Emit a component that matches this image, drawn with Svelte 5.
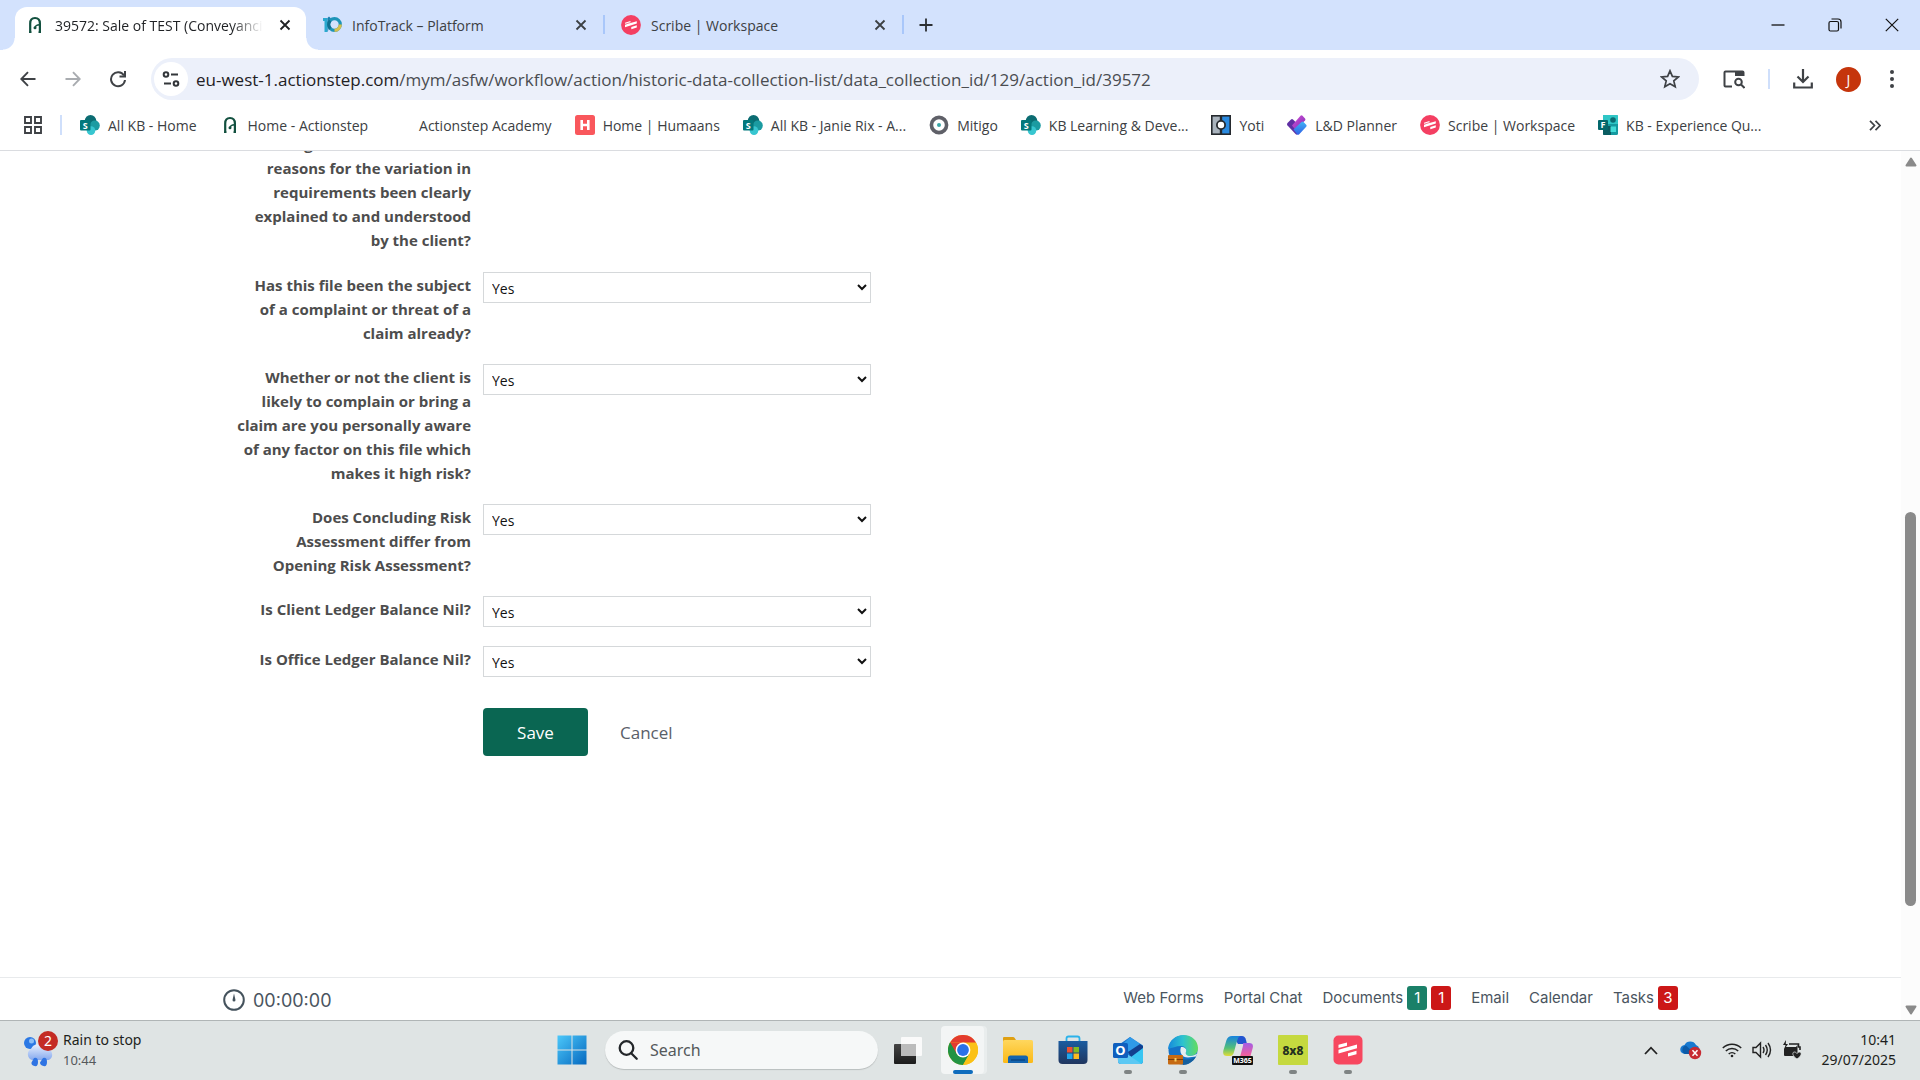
<script>
  const tabs = [
    { title: '39572: Sale of TEST (Conveyancing)', icon: 'actionstep', active: true },
    { title: 'InfoTrack – Platform', icon: 'infotrack', active: false },
    { title: 'Scribe | Workspace', icon: 'scribe', active: false }
  ];

  const bookmarks = [
    { title: 'All KB - Home', icon: 'sharepoint' },
    { title: 'Home - Actionstep', icon: 'actionstep' },
    { title: 'Actionstep Academy', icon: 'blank' },
    { title: 'Home | Humaans', icon: 'humaans' },
    { title: 'All KB - Janie Rix - A...', icon: 'sharepoint' },
    { title: 'Mitigo', icon: 'mitigo' },
    { title: 'KB Learning & Deve...', icon: 'sharepoint' },
    { title: 'Yoti', icon: 'yoti' },
    { title: 'L&D Planner', icon: 'planner' },
    { title: 'Scribe | Workspace', icon: 'scribe' },
    { title: 'KB - Experience Qu...', icon: 'forms' }
  ];

  const questions = [
    'Has this file been the subject\nof a complaint or threat of a\nclaim already?',
    'Whether or not the client is\nlikely to complain or bring a\nclaim are you personally aware\nof any factor on this file which\nmakes it high risk?',
    'Does Concluding Risk\nAssessment differ from\nOpening Risk Assessment?',
    'Is Client Ledger Balance Nil?',
    'Is Office Ledger Balance Nil?'
  ];

  const footerLinks = [
    { label: 'Web Forms', badges: [] },
    { label: 'Portal Chat', badges: [] },
    { label: 'Documents', badges: [{ n: 1, tone: 'green' }, { n: 1, tone: 'red' }] },
    { label: 'Email', badges: [] },
    { label: 'Calendar', badges: [] },
    { label: 'Tasks', badges: [{ n: 3, tone: 'red' }] }
  ];

  const apps = [
    { name: 'Task view', icon: 'taskview', state: '' },
    { name: 'Chrome', icon: 'chrome', state: 'current' },
    { name: 'File Explorer', icon: 'folder', state: '' },
    { name: 'Store', icon: 'store', state: '' },
    { name: 'Outlook', icon: 'outlook', state: 'running' },
    { name: 'Edge', icon: 'edge', state: 'running' },
    { name: 'M365 Copilot', icon: 'copilot', state: '' },
    { name: '8x8', icon: 'eight', state: 'running' },
    { name: 'Scribe', icon: 'scribeapp', state: 'running' }
  ];
</script>

{#snippet siteIcon(name)}
  <svg class="site-icon" viewBox="0 0 20 20" aria-hidden="true">
    {#if name === 'actionstep'}
      <path d="M5.200 17V8.400C5.200 5 7.200 3 10 3s4.900 2 4.900 5.400V17" fill="none" stroke="#12503f" stroke-width="2.200" />
      <path d="M14.500 9.800c-2.600 0-4 .8-4.500 3" fill="none" stroke="#12503f" stroke-width="1.500" />
      <circle cx="10" cy="12.800" r="1.500" fill="#12503f" />
      <path d="M4 17.300h2.500M13.500 17.300H16" stroke="#12503f" stroke-width="1.500" />
    {:else if name === 'infotrack'}
      <path d="M1 3h4.500v14H2.500V6H1z" fill="#2aa9cf" />
      <path d="M5.500 17C8 13 5.500 8 9 3.500L7 1.500 5.500 3z" fill="#1b7fae" />
      <circle cx="12.500" cy="9.500" r="5.800" fill="none" stroke="#1d94b8" stroke-width="3.200" />
      <path d="M18.300 9.500a5.800 5.800 0 0 1-5.800 5.800" fill="none" stroke="#d6c04e" stroke-width="3.200" />
      <path d="M8.200 5.600a5.800 5.800 0 0 0 .2 8" fill="none" stroke="#0f6f8f" stroke-width="3.200" />
    {:else if name === 'scribe'}
      <circle cx="10" cy="10" r="9.900" fill="#f43f62" />
      <path d="m4 7.800 5.500-1.700v2L15.800 6.300v2.300L4 12.200V9.800l2-.6H4zM10.300 12l5.500-1.700v2.200l-5.500 1.800z" fill="#fff" />
      <path d="m4 9.200 5.800-1.700" stroke="#f43f62" stroke-width=".7" />
    {:else if name === 'sharepoint'}
      <circle cx="10.500" cy="5.800" r="5.800" fill="#0b6c72" />
      <circle cx="14.800" cy="10.600" r="5" fill="#1b9ba1" />
      <circle cx="11" cy="15.600" r="4.300" fill="#37c6d0" />
      <rect x="0" y="5" width="10.500" height="10.500" rx="1" fill="#03787c" />
      <text x="5.200" y="13.500" font-size="9" font-weight="700" fill="#fff" text-anchor="middle">S</text>
    {:else if name === 'humaans'}
      <rect width="20" height="20" rx="2.500" fill="#f9575c" />
      <path d="M6.700 5v10M13.300 5v10M6.700 10h6.600" stroke="#fff" stroke-width="2.600" />
    {:else if name === 'mitigo'}
      <circle cx="10" cy="10" r="7.600" fill="none" stroke="#5f6068" stroke-width="3.600" />
      <circle cx="10" cy="10" r="2" fill="#3aa6a6" />
    {:else if name === 'yoti'}
      <rect x="0.800" y="0.800" width="18.400" height="18.400" fill="#a9b3bd" />
      <path d="M10 1h9.200v18H10z" fill="#2a8ae0" />
      <rect x="0.800" y="0.800" width="18.400" height="18.400" fill="none" stroke="#25292e" stroke-width="1.600" />
      <path d="M10 0v20" stroke="#25292e" stroke-width="2.400" />
      <circle cx="10" cy="10" r="4.100" fill="#fff" stroke="#25292e" stroke-width="1.800" />
    {:else if name === 'planner'}
      <defs>
        <linearGradient id="plA" x1="0" y1="0" x2="1" y2="1"><stop offset="0" stop-color="#d84fd8" /><stop offset="1" stop-color="#7a2fb5" /></linearGradient>
        <linearGradient id="plB" x1="0" y1="0" x2="0" y2="1"><stop offset="0" stop-color="#41b5f5" /><stop offset="1" stop-color="#2f5fe6" /></linearGradient>
      </defs>
      <path d="m.5 8 3.500-3.500q1-1 2 0l4.500 4.500v10.500q-1 .5-2-.5l-8-8.500q-1-1.200 0-2.500" fill="#5f2fa3" />
      <path d="M5 10.500 13.500.8q1-1 2 0L18 3.500q.8 1 0 2L8.500 15z" fill="url(#plA)" />
      <path d="m6.500 14.500 8-7.500q1-1 2 0l2.700 2.800q.8 1 0 2L12 19.500q-1 .8-2-.3z" fill="url(#plB)" />
    {:else if name === 'forms'}
      <rect x="5" y="0" width="15" height="20" rx="1.500" fill="#159aa0" />
      <path d="M5 0h14q1 0 1 1v8H5z" fill="#2fc6c6" />
      <path d="M5 11h8v9H6q-1 0-1-1z" fill="#0a5c61" />
      <circle cx="15" cy="5" r="2.800" fill="#0b6c72" />
      <rect x="12.500" y="11.500" width="5.500" height="5.500" fill="#43dcd8" />
      <rect x="0" y="5" width="10" height="10" rx="1" fill="#03676b" />
      <text x="5" y="13.200" font-size="9" font-weight="700" fill="#fff" text-anchor="middle">F</text>
    {/if}
  </svg>
{/snippet}

{#snippet cross()}
  <svg width="12" height="12" viewBox="0 0 12 12" aria-hidden="true"><path d="m1.500 1.500 9 9m0-9-9 9" stroke="currentColor" stroke-width="1.800" /></svg>
{/snippet}

{#snippet appIcon(name)}
  <svg class="app-icon" viewBox="0 0 30 30" aria-hidden="true">
    {#if name === 'taskview'}
      <defs><linearGradient id="tvA" x1="0" y1="0" x2="0" y2="1"><stop offset="0" stop-color="#444" /><stop offset="1" stop-color="#1c1c1c" /></linearGradient></defs>
      <rect x="1" y="9" width="22" height="20" rx="1" fill="url(#tvA)" />
      <rect x="8" y="2" width="21" height="19" rx="1" fill="#fafafa" />
      <path d="M8 9h15v12H8z" fill="#bcbcbc" />
    {:else if name === 'chrome'}
      <circle cx="15" cy="15" r="15" fill="#fbc116" />
      <path d="M2 7.500A15 15 0 0 0 15 30l6.500-11.300L15 15z" fill="#229342" />
      <path d="M15 7.500h13A15 15 0 0 1 15 30l6.500-11.200z" fill="#fbc116" />
      <path d="M2 7.500A15 15 0 0 1 28 7.500H15z" fill="#e33b2e" />
      <path d="m2 7.500 6.500 11.200L15 15V7.500z" fill="#e33b2e" />
      <path d="m2 7.500 6.500 11.200L4 21A15 15 0 0 1 2 7.500" fill="#229342" />
      <circle cx="15" cy="15" r="7.400" fill="#fff" />
      <circle cx="15" cy="15" r="5.900" fill="#2a71e8" />
    {:else if name === 'folder'}
      <defs><linearGradient id="foA" x1="0" y1="0" x2="0" y2="1"><stop offset="0" stop-color="#ffd75e" /><stop offset="1" stop-color="#fbb917" /></linearGradient></defs>
      <path d="M0 3q0-1 1-1h9q1 0 1.500.8L13 5v8H0z" fill="#dfa012" />
      <rect x="0" y="5" width="30" height="23" rx="1.500" fill="url(#foA)" />
      <path d="M5 28v-5q0-2.500 2.500-2.500h15q2.500 0 2.500 2.500v5z" fill="#1464ae" />
      <path d="M8 25h14" stroke="#0b4d8f" stroke-width="2" />
    {:else if name === 'store'}
      <defs><linearGradient id="stA" x1="0" y1="0" x2="0" y2="1"><stop offset="0" stop-color="#1b5ca0" /><stop offset="1" stop-color="#20365f" /></linearGradient></defs>
      <path d="M8.500 8V3.500q0-2 2-2h9q2 0 2 2V8" fill="none" stroke="#2bb2ea" stroke-width="1.800" />
      <path d="M.5 6h29v19q0 4-4 4h-21q-4 0-4-4z" fill="url(#stA)" />
      <path d="M9 12h5.500v5.500H9z" fill="#ef5130" /><path d="M15.500 12H21v5.500h-5.500z" fill="#80bb22" />
      <path d="M9 18.500h5.500V24H9z" fill="#20a5ea" /><path d="M15.500 18.500H21V24h-5.500z" fill="#fcba20" />
    {:else if name === 'outlook'}
      <path d="M4 11 17 2l13 9v15q0 3-3 3H8q-3 0-3-3z" fill="#1b72cd" />
      <path d="m9 10 8-8 13 8.500L18 19z" fill="#2f9ae8" />
      <path d="m30 11-14 11 3 7h8q3 0 3-3z" fill="#38c5f2" />
      <path d="m15 17 12-8 3 2v2L18 22z" fill="#123f8e" />
      <path d="M5 19h9l14 9.500q-.5.500-1 .5H8q-3 0-3-3z" fill="#5cc8f3" />
      <rect x="0" y="8" width="15" height="15" rx="1.500" fill="#0f5fbe" />
      <text x="7.500" y="20" font-size="13" font-weight="700" fill="#fff" text-anchor="middle">O</text>
    {:else if name === 'edge'}
      <defs><linearGradient id="edA" x1="0" y1="0" x2="1" y2="0"><stop offset="0" stop-color="#1689dc" /><stop offset=".5" stop-color="#2dc3cf" /><stop offset="1" stop-color="#63dc5d" /></linearGradient></defs>
      <circle cx="15" cy="15" r="14.500" fill="#1472c8" />
      <path d="M0 14C1 5 8 0 15.500 0 24 0 30 6 30 13c0 5-3.500 8-8 8-4 0-5-2-4-4 1-3-1-6-5-6-5 0-9 2-13 3" fill="url(#edA)" />
      <path d="M13 12c4 0 6 2 5 5-1 2 1 4 4 4 3 0 5-1 7-2.500 0 1-.4 2-1 3l-8 1c-6 0-9-5-7-10.500" fill="#e4edf1" />
      <path d="M10 21c5 5 12 4 18 .500C25 27 20 30 15 30z" fill="#155f9e" />
      <rect x="0" y="20" width="15" height="9.500" rx="1" fill="#c66a12" /><path d="M0 24.500h15" stroke="#7a3d08" />
      <path d="M7.500 23v3.500" stroke="#f4cf62" stroke-width="2" />
    {:else if name === 'copilot'}
      <defs>
        <linearGradient id="coA" x1="0" y1="0" x2="0" y2="1"><stop offset="0" stop-color="#1683e0" /><stop offset=".6" stop-color="#52bf78" /><stop offset="1" stop-color="#e2dc38" /></linearGradient>
        <linearGradient id="coB" x1="0" y1="0" x2="0" y2="1"><stop offset="0" stop-color="#a45de5" /><stop offset=".6" stop-color="#ef5fa0" /><stop offset="1" stop-color="#fb9a55" /></linearGradient>
      </defs>
      <path d="M10 1h9q3 0 4 4l1 4h-9z" fill="#2255d0" />
      <path d="M9 1h8q-2 1-3 5l-3 11q-1 4-4 4H4q-5 0-3.500-6l3-10Q5 1 9 1" fill="url(#coA)" />
      <path d="M20 8h6q5 0 3.700 5l-2.500 9q-1.500 6-6.500 6h-8q3-1 4-5l3-11q1-4 0-4" fill="url(#coB)" />
      <rect x="9" y="21" width="21" height="9" rx="1" fill="#111" />
      <text x="19.500" y="28.300" font-size="7" font-weight="700" fill="#fff" text-anchor="middle">M365</text>
    {:else if name === 'eight'}
      <rect width="30" height="30" rx="1" fill="#c5d93f" />
      <text x="15" y="19.500" font-size="12" font-weight="800" fill="#24301f" text-anchor="middle">8x8</text>
    {:else if name === 'scribeapp'}
      <rect x="0.500" y="0.500" width="29" height="29" rx="5" fill="#f7475f" />
      <path d="m5.500 9.800 8.500-2.300v3.200l-8.500 2.300zM5.500 14.800 24 9.500v3.800L5.500 18.500zM15 18.200l8.500-2.400v3.400L15 21.600z" fill="#fff" />
    {/if}
  </svg>
{/snippet}

<div class="desktop">
  <header class="browser">
    <div class="tabstrip">
      {#each tabs as tab}
        <div class="tab" class:active={tab.active}>
          {@render siteIcon(tab.icon)}
          <span class="tab-title">{tab.title}</span>
          <button class="tab-close" aria-label="Close tab">{@render cross()}</button>
        </div>
      {/each}
      <button class="plain new-tab" aria-label="New tab">
        <svg width="14" height="14" viewBox="0 0 14 14"><path d="M7 .5v13M.5 7h13" stroke="#2c2f33" stroke-width="1.800" /></svg>
      </button>
      <div class="window-controls">
        <button class="plain" aria-label="Minimise"><svg width="14" height="14" viewBox="0 0 14 14"><path d="M.5 7h13" stroke="#111" stroke-width="1.300" /></svg></button>
        <button class="plain" aria-label="Restore"><svg width="14" height="14" viewBox="0 0 14 14" fill="none" stroke="#111" stroke-width="1.200"><rect x="1" y="3.500" width="9.500" height="9.500" rx="1.500" /><path d="M3.500 1h6.500q3 0 3 3v6.500" /></svg></button>
        <button class="plain" aria-label="Close"><svg width="14" height="14" viewBox="0 0 14 14"><path d="m.8.8 12.400 12.400m0-12.400L.8 13.200" stroke="#111" stroke-width="1.200" /></svg></button>
      </div>
    </div>

    <div class="toolbar">
      <div class="nav">
        <button class="plain" aria-label="Back"><svg width="16" height="16" viewBox="0 0 16 16" fill="none" stroke="#3f4246" stroke-width="1.900"><path d="M15.500 8H1.500M8 1.200 1.300 8 8 14.800" /></svg></button>
        <button class="plain" aria-label="Forward"><svg width="16" height="16" viewBox="0 0 16 16" fill="none" stroke="#a9acb0" stroke-width="1.900"><path d="M.5 8h14M8 1.200 14.700 8 8 14.800" /></svg></button>
        <button class="plain" aria-label="Reload"><svg width="18" height="18" viewBox="0 0 18 18" fill="none" stroke="#3f4246" stroke-width="2"><path d="M15 5.500A7 7 0 1 0 16 10" /><path d="M16 1v5.500h-5.500" /></svg></button>
      </div>
      <div class="omnibox">
        <button class="plain site-info" aria-label="Site information">
          <svg width="18" height="18" viewBox="0 0 18 18" fill="none" stroke="#33363a" stroke-width="2"><circle cx="4" cy="4.500" r="2.300" /><path d="M9 4.500h7M2 13.500h7" /><circle cx="14" cy="13.500" r="2.300" /></svg>
        </button>
        <a class="url" href="#top"><span>eu-west-1.actionstep.com</span>/mym/asfw/workflow/action/historic-data-collection-list/data_collection_id/129/action_id/39572</a>
        <button class="plain star" aria-label="Bookmark this page">
          <svg width="20" height="20" viewBox="0 0 20 20"><path d="m10 1.800 2.400 5.600 6 .5-4.600 4 1.400 5.900L10 14.700l-5.200 3.100 1.400-5.900-4.600-4 6-.5z" fill="none" stroke="#3f4246" stroke-width="1.700" /></svg>
        </button>
      </div>
      <div class="actions">
        <button class="plain" aria-label="Side search"><svg width="22" height="20" viewBox="0 0 22 20" fill="none" stroke="#3f4246" stroke-width="2"><path d="M9 17.500H2.500q-1 0-1-1v-13q0-1 1-1h17q1 0 1 1V7" /><path d="M12 2h9v5h-9z" fill="#3f4246" stroke="none" /><circle cx="15.500" cy="13" r="3.300" /><path d="m18 15.500 3.500 3.500" /></svg></button>
        <span class="divider"></span>
        <button class="plain" aria-label="Downloads"><svg width="20" height="20" viewBox="0 0 20 20" fill="none" stroke="#3f4246" stroke-width="2.200"><path d="M10 0v12.500M4.500 7.500 10 13l5.500-5.500M1.200 13.500v5h17.600v-5" /></svg></button>
        <button class="plain avatar">J</button>
        <button class="plain menu" aria-label="Menu"><svg width="4" height="18" viewBox="0 0 4 18" fill="#3f4246"><circle cx="2" cy="2" r="2" /><circle cx="2" cy="9" r="2" /><circle cx="2" cy="16" r="2" /></svg></button>
      </div>
    </div>

    <nav class="bookmarks">
      <button class="plain" aria-label="Apps"><svg width="18" height="18" viewBox="0 0 18 18" fill="none" stroke="#3f4246" stroke-width="1.900"><path d="M1 1h6v6H1zM11 1h6v6h-6zM1 11h6v6H1zM11 11h6v6h-6z" /></svg></button>
      <span class="divider"></span>
      <div class="bookmark-list">
        {#each bookmarks as mark}
          <a href="#bookmark">{@render siteIcon(mark.icon)}<span>{mark.title}</span></a>
        {/each}
      </div>
      <button class="plain" aria-label="More bookmarks"><svg width="12" height="11" viewBox="0 0 12 11" fill="none" stroke="#3f4246" stroke-width="1.700"><path d="m1 .8 4.500 4.700L1 10.200M6.500.8 11 5.500l-4.500 4.700" /></svg></button>
    </nav>
  </header>

  <div class="viewport">
    <div class="page">
      <main>
        <form onsubmit={(e) => e.preventDefault()}>
          <div class="row scrolled">
            <p class="question">{'Change recorded? Have the\nreasons for the variation in\nrequirements been clearly\nexplained to and understood\nby the client?'}</p>
          </div>
          {#each questions as question, i}
            <div class="row">
              <label class="question" for="q{i}">{question}</label>
              <select id="q{i}"><option>Yes</option><option>No</option></select>
            </div>
          {/each}
          <div class="buttons">
            <button class="save" type="submit">Save</button>
            <button class="cancel" type="button">Cancel</button>
          </div>
        </form>
      </main>
      <footer>
        <div class="timer">
          <svg width="22" height="22" viewBox="0 0 22 22"><circle cx="11" cy="11" r="9.800" fill="none" stroke="#44525c" stroke-width="2" /><path d="M11 4.500 12.500 11a1.500 1.500 0 1 1-3 0z" fill="#44525c" /></svg>
          <span>00:00:00</span>
        </div>
        <nav class="links">
          {#each footerLinks as link}
            <a href="#{link.label}"><span>{link.label}</span>{#each link.badges as badge}<b class={badge.tone}>{badge.n}</b>{/each}</a>
          {/each}
        </nav>
      </footer>
    </div>
    <div class="scrollbar" aria-hidden="true">
      <svg width="12" height="10" viewBox="0 0 12 10"><path d="M6 1.500 10.500 8.500h-9z" fill="#8a8a8a" stroke="#8a8a8a" stroke-width="2" stroke-linejoin="round" /></svg>
      <div class="track"><div class="thumb"></div></div>
      <svg width="12" height="10" viewBox="0 0 12 10"><path d="M6 8.500 1.500 1.500h9z" fill="#8a8a8a" stroke="#8a8a8a" stroke-width="2" stroke-linejoin="round" /></svg>
    </div>
  </div>

  <div class="taskbar">
    <button class="plain weather">
      <svg width="36" height="38" viewBox="0 0 36 38">
        <defs><linearGradient id="wA" x1="0" y1="0" x2="0" y2="1"><stop offset="0" stop-color="#e8f0fe" /><stop offset="1" stop-color="#86a9ee" /></linearGradient></defs>
        <circle cx="7" cy="12" r="6" fill="#2b78e4" /><circle cx="8.500" cy="10" r="2.500" fill="#8dc0f7" />
        <path d="M9 29a6 6 0 0 1-1-11 8 8 0 0 1 14-1 6.500 6.500 0 0 1 4 12z" fill="url(#wA)" />
        <path d="M11 27q4-1 4 4t-3.500 4-3-3.500M20 27q4-1 4 4t-3.500 4-3.500-3.500" fill="#2f74e3" />
        <circle cx="25" cy="10" r="10" fill="#c42b24" />
        <text x="25" y="15" font-size="14" fill="#fff" text-anchor="middle">2</text>
      </svg>
      <span class="weather-text"><span>Rain to stop</span><small>10:44</small></span>
    </button>
    <div class="dock">
      <button class="plain start" aria-label="Start">
        <svg width="30" height="30" viewBox="0 0 30 30">
          <defs><linearGradient id="winA" x1="0" y1="0" x2="1" y2="1"><stop offset="0" stop-color="#4cc8fa" /><stop offset="1" stop-color="#0568bf" /></linearGradient></defs>
          <path d="M.5.500h14v14H.5zM15.500.500h14v14h-14zM.5 15.500h14v14H.5zM15.500 15.500h14v14h-14z" fill="url(#winA)" />
        </svg>
      </button>
      <label class="search">
        <svg width="20" height="20" viewBox="0 0 20 20" fill="none" stroke="#23272a" stroke-width="2.300"><circle cx="8.500" cy="8" r="6.800" /><path d="m13.200 13.200 5.500 5.500" stroke-linecap="round" /></svg>
        <input type="text" placeholder="Search" aria-label="Search" />
      </label>
      {#each apps as app}
        <button class="plain app {app.state}" aria-label={app.name}>{@render appIcon(app.icon)}</button>
      {/each}
    </div>
    <div class="tray">
      <svg class="chev" width="14" height="9" viewBox="0 0 14 9"><path d="m1 8 6-6.300L13 8" fill="none" stroke="#222" stroke-width="1.800" /></svg>
      <svg class="cloud" width="22" height="20" viewBox="0 0 22 20"><path d="M5 14a4.500 4.500 0 0 1-.5-9A6.500 6.500 0 0 1 16 5a5 5 0 0 1 1 9z" fill="#1879d0" /><path d="M5 14a4.500 4.500 0 0 1 1-8.500l9 8.500z" fill="#0d5ba8" /><circle cx="15" cy="13" r="6.200" fill="#c72a32" /><path d="m12.500 10.300 5 5.400m0-5.400-5 5.400" stroke="#fff" stroke-width="1.500" /></svg>
      <svg width="20" height="16" viewBox="0 0 20 16" fill="none" stroke="#222" stroke-width="1.500"><path d="M.8 6a13 13 0 0 1 18.400 0M3.800 9a8.800 8.800 0 0 1 12.400 0M6.700 12a4.800 4.800 0 0 1 6.600 0" /><circle cx="10" cy="14" r="1.300" fill="#222" stroke="none" /></svg>
      <svg width="20" height="18" viewBox="0 0 20 18" fill="none" stroke="#222" stroke-width="1.400"><path d="M1 6.500h3L8.500 2v14L4 11.500H1zM11 6q2 3 0 6M13.500 4q3.500 5 0 10M16 2q5 7 0 14" /></svg>
      <svg width="20" height="20" viewBox="0 0 20 20"><path d="M7 4h9.500v3H18v3" fill="none" stroke="#222" stroke-width="1.600" /><path d="M3 7h11l1.500-2v9L12 16H3q-1 0-1-1V9z" fill="#222" /><path d="M4 0 1 5h2.500L2.500 9 6 4H3.800z" fill="#222" /><path d="M15 19c-5-3-5-7-2.500-7 1.500 0 2.500 1.500 2.500 1.500S16 12 17.500 12c2.500 0 2.500 4-2.500 7" fill="#222" stroke="#dfe4e4" stroke-width=".8" /></svg>
      <div class="clock"><span>10:41</span><span>29/07/2025</span></div>
    </div>
  </div>
</div>

<style>
  :global(body) {
    margin: 0;
    background: #fff;
  }
  .desktop {
    display: flex;
    flex-direction: column;
    height: 100vh;
    overflow: hidden;
    font-family: 'Open Sans', 'Noto Sans', sans-serif;
    font-size: 14px;
    color: #3c4043;
  }
  button,
  input,
  select {
    font: inherit;
    color: inherit;
  }
  a {
    color: inherit;
    text-decoration: none;
  }
  svg {
    display: block;
    flex: none;
  }
  .plain {
    display: flex;
    align-items: center;
    justify-content: center;
    padding: 0;
    border: 0;
    background: none;
  }
  .divider {
    width: 2px;
    height: 20px;
    background: #cfdffb;
  }
  .site-icon {
    width: 20px;
    height: 20px;
  }

  /* Tab strip */
  .tabstrip {
    display: flex;
    height: 50px;
    box-sizing: border-box;
    padding-left: 15px;
    background: #d3e2fd;
  }
  .tab {
    position: relative;
    display: flex;
    align-items: center;
    flex: 0 1 299px;
    min-width: 0;
    box-sizing: border-box;
    gap: 10px;
    padding: 0 16px 0 16px;
  }
  .tab:not(.active)::after {
    content: '';
    position: absolute;
    right: 0;
    top: 15px;
    width: 2px;
    height: 19px;
    background: #a9c7fa;
  }
  .tab.active {
    flex-basis: 291px;
    height: 43px;
    margin-top: 7px;
    padding: 0 13px 7px 10px;
    border-radius: 12px 12px 0 0;
    background: #fff;
    color: #1f2124;
  }
  .tab.active::before,
  .tab.active::after {
    content: '';
    position: absolute;
    bottom: 0;
    width: 12px;
    height: 12px;
  }
  .tab.active::before {
    right: 100%;
    background: radial-gradient(circle at 0 0, transparent 11px, #fff 12px);
  }
  .tab.active::after {
    left: 100%;
    background: radial-gradient(circle at 100% 0, transparent 11px, #fff 12px);
  }
  .tab-title {
    flex: 1;
    min-width: 0;
    overflow: hidden;
    white-space: nowrap;
  }
  .active .tab-title {
    mask-image: linear-gradient(90deg, #000 85%, transparent);
  }
  .tab-close {
    display: flex;
    padding: 2px;
    border: 0;
    background: none;
  }
  .active .tab-close {
    margin-left: 4px;
  }
  .new-tab {
    width: 44px;
  }
  .window-controls {
    display: flex;
    margin-left: auto;
  }
  .window-controls .plain {
    width: 57px;
  }

  /* Toolbar */
  .toolbar {
    display: flex;
    align-items: center;
    height: 58px;
  }
  .nav {
    display: flex;
    padding: 0 11px 0 5px;
  }
  .nav .plain {
    width: 45px;
    height: 40px;
  }
  .omnibox {
    display: flex;
    flex: 1;
    min-width: 0;
    align-items: center;
    height: 42px;
    border-radius: 21px;
    background: #ecf0fa;
  }
  .site-info {
    flex: none;
    width: 34px;
    height: 34px;
    margin: 0 8px 0 3px;
    border-radius: 50%;
    background: #fff;
  }
  .url {
    flex: 1;
    min-width: 0;
    overflow: hidden;
    white-space: nowrap;
    font-size: 17px;
    color: #4a4d51;
  }
  .url span {
    color: #1f2124;
  }
  .star {
    width: 58px;
  }
  .actions {
    display: flex;
    align-items: center;
    gap: 23px;
    padding: 0 20px 0 24px;
  }
  .avatar {
    width: 25px;
    height: 25px;
    border-radius: 50%;
    background: #c5350c;
    color: #fff;
  }
  .menu {
    width: 16px;
  }

  /* Bookmarks */
  .bookmarks {
    display: flex;
    align-items: center;
    gap: 18px;
    height: 43px;
    box-sizing: border-box;
    padding: 0 39px 8px 24px;
    border-bottom: 1px solid #dadce0;
  }
  .bookmark-list {
    display: flex;
    flex: 1;
    min-width: 0;
    gap: 23px;
    overflow: hidden;
    white-space: nowrap;
  }
  .bookmark-list a {
    display: flex;
    align-items: center;
    gap: 8px;
  }

  /* Page */
  .viewport {
    display: flex;
    flex: 1;
    min-height: 0;
  }
  .page {
    display: flex;
    flex-direction: column;
    flex: 1;
    min-width: 0;
  }
  main {
    flex: 1;
    min-height: 0;
    overflow: hidden;
  }
  form {
    padding-left: 210px;
  }
  .row {
    display: grid;
    grid-template-columns: 261px 388px;
    align-items: start;
    column-gap: 12px;
    min-height: 32px;
    margin-bottom: 19px;
  }
  .row:has(select) {
    min-height: 31px;
  }
  .row.scrolled {
    margin-top: -20px;
    margin-bottom: 20px;
  }
  .question {
    margin: 0;
    padding-top: 1px;
    text-align: right;
    white-space: pre;
    font-size: 15px;
    line-height: 24px;
    font-weight: 700;
    color: #4d4d4d;
  }
  select {
    width: 100%;
    height: 31px;
    padding: 2px 4px 0;
    border: 1px solid #d5d8da;
    border-radius: 0;
    background: #fff;
    color: #111;
  }
  .buttons {
    display: flex;
    gap: 32px;
    padding: 12px 0 0 273px;
  }
  .save {
    width: 105px;
    height: 48px;
    border: 0;
    border-radius: 4px;
    background: #0a6652;
    color: #fff;
    font-size: 17px;
  }
  .cancel {
    padding: 0;
    border: 0;
    background: none;
    color: #5a6068;
    font-size: 17px;
  }

  /* Footer */
  footer {
    display: flex;
    justify-content: space-between;
    height: 42px;
    padding: 0 223px;
    border-top: 1px solid #e8eaec;
    font-family: Inter, sans-serif;
    color: #4a5560;
  }
  .timer {
    display: flex;
    align-items: center;
    gap: 8px;
    padding-top: 2px;
    font-size: 18px;
  }
  .links {
    display: flex;
    align-items: center;
    gap: 20px;
    padding-bottom: 3px;
    font-size: 15px;
  }
  .links a {
    display: flex;
    align-items: center;
    gap: 4px;
  }
  .links b {
    width: 20px;
    border-radius: 3px;
    line-height: 24px;
    text-align: center;
    font-weight: 400;
    color: #fff;
  }
  .links .green {
    background: #1a8068;
  }
  .links .red {
    background: #cc1717;
  }
  .scrollbar {
    display: flex;
    flex-direction: column;
    align-items: center;
    width: 19px;
    box-sizing: border-box;
    padding: 6px 0 5px;
    background: #fcfcfc;
  }
  .track {
    display: flex;
    flex: 1;
    flex-direction: column;
    justify-content: flex-end;
  }
  .thumb {
    width: 11px;
    height: 47%;
    margin-bottom: 99px;
    border-radius: 6px;
    background: #8a8a8a;
  }

  /* Taskbar */
  .taskbar {
    display: grid;
    grid-template-columns: 1fr auto 1fr;
    align-items: center;
    height: 60px;
    box-sizing: border-box;
    padding-bottom: 1px;
    border-top: 1px solid #b0b5b6;
    background: #dfe4e4;
    font-family: 'Noto Sans', 'Open Sans', sans-serif;
  }
  .weather {
    justify-self: start;
    gap: 4px;
    padding-left: 23px;
  }
  .weather-text {
    display: flex;
    flex-direction: column;
    line-height: 20px;
    text-align: left;
    color: #1d1f20;
  }
  .weather-text small {
    font-size: 13px;
    color: #55595b;
  }
  .dock {
    display: flex;
    align-items: center;
    padding-left: 12px;
  }
  .start {
    margin-right: 18px;
  }
  .search {
    display: flex;
    align-items: center;
    gap: 12px;
    width: 273px;
    height: 38px;
    box-sizing: border-box;
    margin-right: 2px;
    padding-left: 13px;
    border-radius: 19px;
    background: #f6f8f8;
    box-shadow: 0 1px 1px #b9bebe;
  }
  .search input {
    flex: 1;
    min-width: 0;
    padding: 0;
    border: 0;
    outline: 0;
    background: none;
    font-size: 16px;
  }
  .search input::placeholder {
    color: #55595b;
    opacity: 1;
  }
  .app {
    position: relative;
    width: 55px;
    height: 48px;
  }
  .app-icon {
    width: 30px;
    height: 30px;
  }
  .app.current {
    width: 43px;
    margin: 0 6px;
    border-radius: 4px;
    background: #f3f5f5;
    box-shadow: 3px 0 0 #e9eded;
  }
  .app.current::after,
  .app.running::after {
    content: '';
    position: absolute;
    bottom: 0;
    width: 8px;
    height: 4px;
    border-radius: 2px;
    background: #7f8484;
  }
  .app.current::after {
    width: 20px;
    background: #0f6cbd;
  }
  .tray {
    display: flex;
    align-items: center;
    justify-self: end;
    gap: 10px;
    padding-right: 24px;
    color: #1d1f20;
  }
  .chev {
    margin-right: 12px;
  }
  .cloud {
    margin-right: 10px;
  }
  .clock {
    display: flex;
    flex-direction: column;
    margin-left: 10px;
    line-height: 20px;
    text-align: right;
  }
</style>
